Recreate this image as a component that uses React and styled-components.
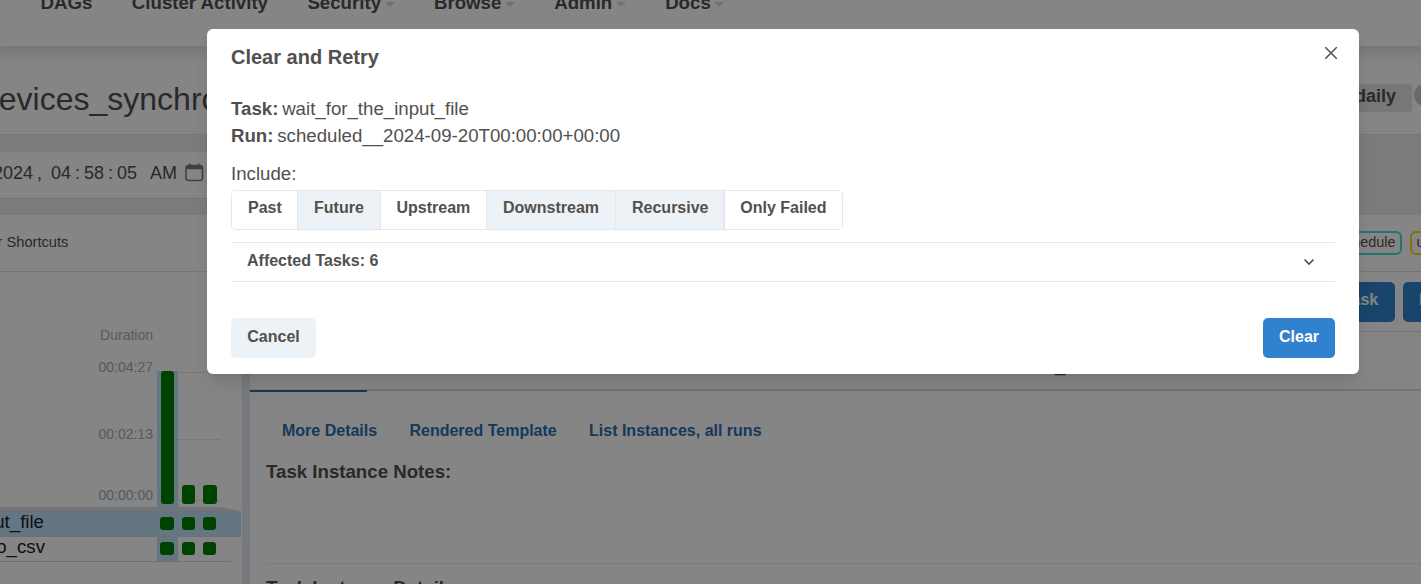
import React from "react";
import styled, { createGlobalStyle } from "styled-components";

const GlobalStyle = createGlobalStyle`
  * { box-sizing: border-box; }
  html, body { margin: 0; padding: 0; overflow: hidden; }
  body {
    font-family: "Liberation Sans", Arial, Helvetica, sans-serif;
    font-size: 18.67px;
    color: #51504f;
    background: #fff;
  }
  button { font: inherit; color: inherit; margin: 0; cursor: pointer; }
`;

const Page = styled.div`
  position: relative;
  width: 1421px;
  height: 584px;
  overflow: hidden;
  display: flex;
  flex-direction: column;
  white-space: nowrap;
`;

/* Navigation */
const NavBar = styled.nav`
  flex: 0 0 46px;
  display: flex;
  gap: 39.4px;
  align-items: flex-start;
  padding-left: 40.6px;
  background: #fff;
  box-shadow: 0 4px 12px 4px rgba(0, 0, 0, 0.12);
  z-index: 1;
`;
const NavItem = styled.a`
  display: flex;
  align-items: center;
  gap: 3.5px;
  height: 22px;
  margin-top: -8px;
  line-height: 22px;
  font-weight: 700;
`;
const Caret = styled.span`
  margin-top: 2px;
  border: 5px solid transparent;
  border-top-color: #e0d5e0;
  border-bottom: 0;
`;

/* Heading */
const TitleBar = styled.header`
  flex: 0 0 89px;
  display: flex;
  justify-content: space-between;
  align-items: flex-start;
  border-bottom: 1px solid #e2e0ea;
  background: #fff;
`;
const Title = styled.h1`
  margin: 32px 0 0 -19px;
  font-size: 32px;
  font-weight: 400;
  line-height: 42px;
`;
const ScheduleInfo = styled.div`
  display: flex;
  gap: 2px;
  margin: 38px -19px 0 0;
`;
const Schedule = styled.span`
  height: 28px;
  padding: 0 16px;
  border-radius: 4px;
  background: #e5e5e5;
  font-size: 18px;
  font-weight: 700;
  line-height: 25px;
`;
const InfoDot = styled.span`
  width: 26px;
  height: 22px;
  border-radius: 11px;
  background: #cbc9c8;
`;

/* Filters */
const FilterArea = styled.section`
  flex: 0 0 80px;
  padding: 17px 0 16px;
  background: #ebebeb;
`;
const FilterBar = styled.div`
  display: flex;
  width: 1100px;
  height: 47px;
  border-bottom: 1px solid #dedcea;
  background: #fff;
  padding-top: 10px;
`;
const DateInput = styled.div`
  display: flex;
  height: 24px;
  margin-left: -7px;
  font-size: 18px;
  line-height: 23px;
`;
const DatePart = styled.span`
  width: ${(p) => p.$width}px;
  text-align: ${(p) => (p.$mark ? "center" : "left")};
`;

/* Legend */
const Legend = styled.div`
  flex: 0 0 57px;
  display: flex;
  justify-content: space-between;
  border-bottom: 1px solid #dfe1e4;
  padding-top: 16px;
  font-size: 14.67px;
`;
const Shortcuts = styled.span`
  margin-left: -2.5px;
  line-height: 22px;
`;
const States = styled.div`
  display: flex;
  gap: 8px;
  margin-right: -80px;
`;
const StateTag = styled.span`
  height: 24px;
  border: 2px solid ${(p) => p.$color};
  border-radius: 6px;
  padding: 0 5px 0 4px;
  font-size: 14.4px;
  line-height: 19px;
`;

/* Main panels */
const Main = styled.main`
  flex: 1;
  display: flex;
  min-height: 0;
`;
const GridPanel = styled.aside`
  flex: 0 0 242px;
  padding-top: 53px;
`;
const Divider = styled.div`
  flex: 0 0 8px;
  background: #e2e8f0;
`;
const Duration = styled.div`
  width: 153px;
  height: 20px;
  text-align: right;
  font-size: 14px;
  line-height: 20px;
  color: #a0aec0;
`;
const ChartRow = styled.div`
  display: flex;
  height: 162px;
`;
const AxisLabels = styled.div`
  display: flex;
  flex-direction: column;
  width: 153px;
  padding-top: 12px;
  text-align: right;
  font-size: 14px;
  line-height: 20px;
  color: #a0aec0;
`;
const AxisLabel = styled.span`
  height: ${(p) => p.$height}px;
`;
const Chart = styled.div`
  display: flex;
  align-items: flex-end;
  width: 64px;
  height: 136px;
  margin: 26px 0 0 4px;
  background:
    linear-gradient(#e4e6e9, #e4e6e9) 0 1px / 100% 1px no-repeat,
    linear-gradient(#e4e6e9, #e4e6e9) 0 68px / 100% 1px no-repeat,
    linear-gradient(#e4e6e9, #e4e6e9) 0 129px / 100% 1px no-repeat;
`;
const RunColumn = styled.div`
  display: flex;
  align-items: flex-end;
  justify-content: center;
  width: 21px;
  height: 136px;
  padding-bottom: 3px;
  background: ${(p) => (p.$selected ? "#bee3f8" : "transparent")};
`;
const Bar = styled.div`
  width: ${(p) => p.$width || 13}px;
  border-radius: 3px;
  background: #008000;
`;
const ScrollEdge = styled.svg`
  display: block;
  width: 242px;
  height: 4px;
`;
const TaskRow = styled.div`
  display: flex;
  width: ${(p) => (p.$selected ? 241 : 231)}px;
  height: ${(p) => (p.$selected ? 26 : 25)}px;
  background: ${(p) => (p.$selected ? "#bee3f8" : "transparent")};
  border-bottom: 1px solid ${(p) => (p.$selected ? "#cdd9e2" : "#d6d8dc")};
`;
const TaskName = styled.div`
  display: flex;
  justify-content: flex-end;
  width: ${(p) => p.$width}px;
  margin-right: ${(p) => 157 - p.$width}px;
  line-height: ${(p) => p.$line}px;
  color: #1a202c;
`;
const Cell = styled.div`
  display: flex;
  align-items: flex-start;
  width: 21px;
  height: 24px;
  padding: ${(p) => p.$top}px 0 0 ${(p) => (p.$selected ? 3 : 4)}px;
  background: ${(p) => (p.$selected ? "#bee3f8" : "transparent")};
`;
const Square = styled.span`
  width: ${(p) => p.$width || 13}px;
  height: 13px;
  border-radius: 3px;
  background: #008000;
`;

const Details = styled.section`
  flex: 1;
  min-width: 0;
  display: flex;
  flex-direction: column;
`;
const Actions = styled.div`
  flex: 0 0 60px;
  display: flex;
  justify-content: flex-end;
  gap: 8px;
  padding-top: 10px;
  margin-right: -128px;
  border-bottom: 1px solid #dfe1e4;
`;
const ActionButton = styled.button`
  height: 40px;
  border: 0;
  border-radius: 5px;
  padding: 0 16px 5px;
  background: #3182ce;
  color: #fff;
  font-size: 16px;
  font-weight: 700;
  width: ${(p) => p.$width}px;
`;
const Tabs = styled.div`
  flex: 0 0 59px;
  min-height: 0;
  display: flex;
  border-bottom: 2px solid #dbe2ea;
`;
const ActiveTab = styled.div`
  width: 117px;
  height: 60px;
  border-bottom: 2px solid #2b6cb0;
`;
const TabMark = styled.span`
  margin-left: 688px;
  padding-top: 23px;
  line-height: 20px;
`;
const Links = styled.div`
  display: flex;
  gap: 32.3px;
  padding: 30px 0 0 32px;
  font-size: 16px;
  font-weight: 700;
  line-height: 20px;
  color: #2b6cb0;
`;
const SectionTitle = styled.h3`
  margin: ${(p) => p.$top}px 0 0 16px;
  font-size: 18.67px;
  line-height: 22px;
`;
const Rule = styled.div`
  flex: 0 0 1px;
  margin: 80px 0 0 16px;
  background: #ececee;
`;

/* Dialog */
const Overlay = styled.div`
  position: absolute;
  inset: 0;
  z-index: 5;
  display: flex;
  align-items: flex-start;
  padding: 29px 0 0 207px;
  background: rgba(0, 0, 0, 0.48);
`;
const Dialog = styled.section`
  display: flex;
  flex-direction: column;
  width: 1152px;
  height: 345px;
  padding: 0 24px;
  border-radius: 6px;
  background: #fff;
  box-shadow: 0 13px 20px -4px rgba(0, 0, 0, 0.1), 0 5px 8px -3px rgba(0, 0, 0, 0.05);
`;
const DialogHeader = styled.header`
  display: flex;
  justify-content: space-between;
  height: 66px;
`;
const DialogTitle = styled.h2`
  margin: 16px 0 0;
  font-size: 20px;
  line-height: 24px;
`;
const CloseButton = styled.button`
  width: 24px;
  height: 24px;
  margin: 12px -8px 0 0;
  border: 0;
  padding: 6px;
  background: none;
`;
const Line = styled.div`
  height: 27px;
  line-height: 27px;
  word-spacing: -1.4px;
`;
const IncludeLabel = styled.div`
  margin-top: 11px;
  height: 30px;
  line-height: 27px;
`;
const Toggles = styled.div`
  display: flex;
  width: 612px;
  height: 40px;
  border: 1px solid #e2e8f0;
  border-radius: 5px;
  overflow: hidden;
`;
const Toggle = styled.button`
  width: ${(p) => p.$width}px;
  border: 0;
  border-left: ${(p) => (p.$first ? 0 : 1)}px solid #e2e8f0;
  border-right: ${(p) => (p.$edge ? 1 : 0)}px solid #e2e8f0;
  padding: 0 0 5px ${(p) => p.$indent || 16}px;
  text-align: left;
  background: ${(p) => (p.$on ? "#edf2f7" : "#fff")};
  font-size: 16px;
  font-weight: 700;
`;
const Affected = styled.button`
  display: flex;
  justify-content: space-between;
  align-items: center;
  height: 40px;
  margin-top: 12px;
  border: 1px solid #e2e8f0;
  border-width: 1px 0;
  padding: 0 18px 0 16px;
  background: #fff;
  font-size: 16px;
  font-weight: 700;
`;
const AffectedText = styled.span`
  margin-top: -3px;
`;
const DialogFooter = styled.footer`
  display: flex;
  justify-content: space-between;
  margin-top: 36px;
`;
const FooterButton = styled.button`
  width: ${(p) => p.$width}px;
  height: 40px;
  border: 0;
  border-radius: 5px;
  padding: 0 0 3px;
  background: ${(p) => (p.$primary ? "#3182ce" : "#edf2f7")};
  color: ${(p) => (p.$primary ? "#fff" : "inherit")};
  font-size: 16px;
  font-weight: 700;
`;
const Icon = styled.svg`
  display: block;
`;

const NAV = [
  ["DAGs", false],
  ["Cluster Activity", false],
  ["Security", true],
  ["Browse", true],
  ["Admin", true],
  ["Docs", true],
];

const DATE = [
  ["2024", 43],
  [",", 7, true],
  ["", 8],
  ["04", 22],
  [":", 9, true],
  ["", 2],
  ["58", 22],
  [":", 9, true],
  ["", 2],
  ["05", 33],
  ["AM", 35],
];

const OPTIONS = [
  { label: "Past", width: 65, first: true },
  { label: "Future", width: 83, on: true },
  { label: "Upstream", width: 106, indent: 15.5 },
  { label: "Downstream", width: 129, on: true },
  { label: "Recursive", width: 109, on: true, edge: true },
  { label: "Only Failed", width: 118, indent: 15.3 },
];

const TASKS = [
  { name: "wait_for_the_input_file", width: 44, line: 21, top: 6, selected: true },
  { name: "input_to_csv", width: 45, line: 19, top: 5 },
];

function CalendarIcon() {
  return (
    <Icon width="19" height="20" viewBox="0 0 19 20">
      <rect x="1" y="3.5" width="16.5" height="15" rx="2.5" fill="none" stroke="#7c7c7c" strokeWidth="1.6" />
      <path d="M1 4h16.5v3.2H1zM4 1.5h1.8v3H4zM12.7 1.5h1.8v3h-1.8z" fill="#7c7c7c" />
    </Icon>
  );
}

export default function App() {
  return (
    <Page>
      <GlobalStyle />
      <NavBar>
        {NAV.map(([label, menu]) => (
          <NavItem key={label}>
            {label}
            {menu && <Caret />}
          </NavItem>
        ))}
      </NavBar>
      <TitleBar>
        <Title>devices_synchro</Title>
        <ScheduleInfo>
          <Schedule>daily</Schedule>
          <InfoDot />
        </ScheduleInfo>
      </TitleBar>
      <FilterArea>
        <FilterBar>
          <DateInput>
            {DATE.map(([text, width, mark], i) => (
              <DatePart key={i} $width={width} $mark={mark}>
                {text}
              </DatePart>
            ))}
            <CalendarIcon />
          </DateInput>
        </FilterBar>
      </FilterArea>
      <Legend>
        <Shortcuts>r Shortcuts</Shortcuts>
        <States>
          <StateTag $color="#40e0d0">up_for_reschedule</StateTag>
          <StateTag $color="#ffd700">up_for_retry</StateTag>
        </States>
      </Legend>
      <Main>
        <GridPanel>
          <Duration>Duration</Duration>
          <ChartRow>
            <AxisLabels>
              <AxisLabel $height={67}>00:04:27</AxisLabel>
              <AxisLabel $height={61}>00:02:13</AxisLabel>
              <AxisLabel $height={20}>00:00:00</AxisLabel>
            </AxisLabels>
            <Chart>
              <RunColumn $selected>
                <Bar style={{ height: 133 }} />
              </RunColumn>
              <RunColumn>
                <Bar style={{ height: 19 }} />
              </RunColumn>
              <RunColumn>
                <Bar $width={14} style={{ height: 19 }} />
              </RunColumn>
            </Chart>
          </ChartRow>
          <ScrollEdge viewBox="0 0 242 4">
            <path d="M0 0H221L241 4H0z" fill="#dcdfe5" />
          </ScrollEdge>
          {TASKS.map((task) => (
            <TaskRow key={task.name} $selected={task.selected}>
              <TaskName $width={task.width} $line={task.line}>
                {task.name}
              </TaskName>
              <Cell $selected $top={task.top}>
                <Square $width={14} />
              </Cell>
              <Cell $top={task.top}>
                <Square />
              </Cell>
              <Cell $top={task.top}>
                <Square />
              </Cell>
            </TaskRow>
          ))}
        </GridPanel>
        <Divider />
        <Details>
          <Actions>
            <ActionButton $width={110}>Clear task</ActionButton>
            <ActionButton $width={146}>Mark state as...</ActionButton>
          </Actions>
          <Tabs>
            <ActiveTab />
            <TabMark>_</TabMark>
          </Tabs>
          <Links>
            <span>More Details</span>
            <span>Rendered Template</span>
            <span>List Instances, all runs</span>
          </Links>
          <SectionTitle $top={20}>Task Instance Notes:</SectionTitle>
          <Rule />
          <SectionTitle $top={13}>Task Instance Details</SectionTitle>
        </Details>
      </Main>
      <Overlay>
        <Dialog role="dialog">
          <DialogHeader>
            <DialogTitle>Clear and Retry</DialogTitle>
            <CloseButton aria-label="Close">
              <Icon width="12" height="12" viewBox="0 0 12 12">
                <path d="M0.5 0.5L11.5 11.5M11.5 0.5L0.5 11.5" stroke="#51504f" strokeWidth="1.5" strokeLinecap="round" />
              </Icon>
            </CloseButton>
          </DialogHeader>
          <Line>
            <b>Task:</b> wait_for_the_input_file
          </Line>
          <Line>
            <b>Run:</b> scheduled__2024-09-20T00:00:00+00:00
          </Line>
          <IncludeLabel>Include:</IncludeLabel>
          <Toggles>
            {OPTIONS.map((o) => (
              <Toggle key={o.label} $width={o.width} $on={o.on} $first={o.first} $edge={o.edge} $indent={o.indent}>
                {o.label}
              </Toggle>
            ))}
          </Toggles>
          <Affected>
            <AffectedText>Affected Tasks: 6</AffectedText>
            <Icon width="16" height="16" viewBox="0 0 16 16">
              <path d="M4 6L8 10L12 6" fill="none" stroke="#51504f" strokeWidth="1.7" strokeLinecap="round" />
            </Icon>
          </Affected>
          <DialogFooter>
            <FooterButton $width={85}>Cancel</FooterButton>
            <FooterButton $width={72} $primary>
              Clear
            </FooterButton>
          </DialogFooter>
        </Dialog>
      </Overlay>
    </Page>
  );
}
